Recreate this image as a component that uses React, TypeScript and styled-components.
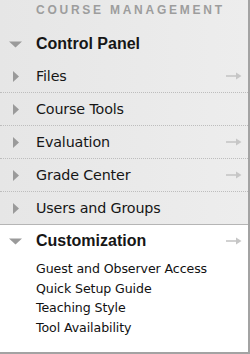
import React from "react";
import styled, { createGlobalStyle } from "styled-components";

const GlobalStyle = createGlobalStyle`
  html, body {
    margin: 0;
    padding: 0;
    background: #fff;
  }
  body {
    font-family: "DejaVu Sans", "Noto Sans", sans-serif;
  }
`;

const Panel = styled.div`
  width: 248px;
  height: 352px;
  border-right: 2px solid #a3a3a3;
  border-bottom: 2px solid #a3a3a3;
  background: #fff;
  display: flex;
  flex-direction: column;
  overflow: hidden;
`;

const Grey = styled.div`
  background: linear-gradient(to right, #e6e6e6, #ededed);
  border-bottom: 1px solid #b5b5b5;
`;

const Heading = styled.div`
  height: 20px;
  padding-left: 36px;
  display: flex;
  align-items: center;
  font-family: "Liberation Sans", Arial, sans-serif;
  font-weight: bold;
  font-size: 12px;
  letter-spacing: 2.75px;
  color: #9d9d9d;
`;

const Row = styled.div<{ $dotted?: boolean; $top?: boolean }>`
  height: ${(p) => (p.$top ? "32px" : "32px")};
  padding-top: ${(p) => (p.$top ? "8px" : "0")};
  display: flex;
  align-items: center;
  border-bottom: ${(p) => (p.$dotted ? "1px dotted #bdbdbd" : "none")};
`;

const Toggle = styled.span`
  width: 36px;
  flex: none;
  display: flex;
  justify-content: center;
  padding-right: 5px;
  box-sizing: border-box;
`;

const Label = styled.span<{ $major?: boolean }>`
  flex: 1;
  font-family: ${(p) =>
    p.$major ? '"Liberation Sans", Arial, sans-serif' : '"DejaVu Sans", sans-serif'};
  font-size: ${(p) => (p.$major ? "16px" : "14.3px")};
  font-weight: ${(p) => (p.$major ? "bold" : "normal")};
  color: #161616;
  letter-spacing: ${(p) => (p.$major ? "0" : "-0.15px")};
`;

const Arrow = styled.span`
  width: 22px;
  flex: none;
  display: flex;
  align-items: center;
`;

const Custom = styled.div`
  flex: 1;
  background: #fff;
`;

const SubList = styled.ul`
  list-style: none;
  margin: 0;
  padding: 2px 0 0 36px;
`;

const SubItem = styled.li`
  font-size: 12.6px;
  line-height: 19.7px;
  color: #111;
  letter-spacing: -0.1px;
`;

const Closed = () => (
  <svg width="8" height="11" viewBox="0 0 8 11">
    <polygon points="1,0 7,5.5 1,11" fill="#9a9a9a" />
  </svg>
);

const Open = () => (
  <svg width="13" height="7" viewBox="0 0 13 7">
    <polygon points="0,0.5 13,0.5 6.5,6.5" fill="#9a9a9a" />
  </svg>
);

const Go = () => (
  <svg width="16" height="8" viewBox="0 0 16 8">
    <line x1="0" y1="4" x2="12" y2="4" stroke="#c6c6c6" strokeWidth="1.6" />
    <polygon points="10,0.5 15.5,4 10,7.5" fill="#c6c6c6" />
  </svg>
);

const items = [
  { name: "Files", go: true },
  { name: "Course Tools", go: false },
  { name: "Evaluation", go: true },
  { name: "Grade Center", go: true },
  { name: "Users and Groups", go: false },
];

const subs = [
  "Guest and Observer Access",
  "Quick Setup Guide",
  "Teaching Style",
  "Tool Availability",
];

export default function App() {
  return (
    <>
      <GlobalStyle />
      <Panel>
        <Grey>
          <Heading>COURSE MANAGEMENT</Heading>
          <Row $top>
            <Toggle>
              <Open />
            </Toggle>
            <Label $major>Control Panel</Label>
          </Row>
          {items.map((it, i) => (
            <Row key={it.name} $dotted={i < items.length - 1}>
              <Toggle>
                <Closed />
              </Toggle>
              <Label>{it.name}</Label>
              <Arrow>{it.go && <Go />}</Arrow>
            </Row>
          ))}
        </Grey>
        <Custom>
          <Row>
            <Toggle>
              <Open />
            </Toggle>
            <Label $major>Customization</Label>
            <Arrow>
              <Go />
            </Arrow>
          </Row>
          <SubList>
            {subs.map((s) => (
              <SubItem key={s}>{s}</SubItem>
            ))}
          </SubList>
        </Custom>
      </Panel>
    </>
  );
}
